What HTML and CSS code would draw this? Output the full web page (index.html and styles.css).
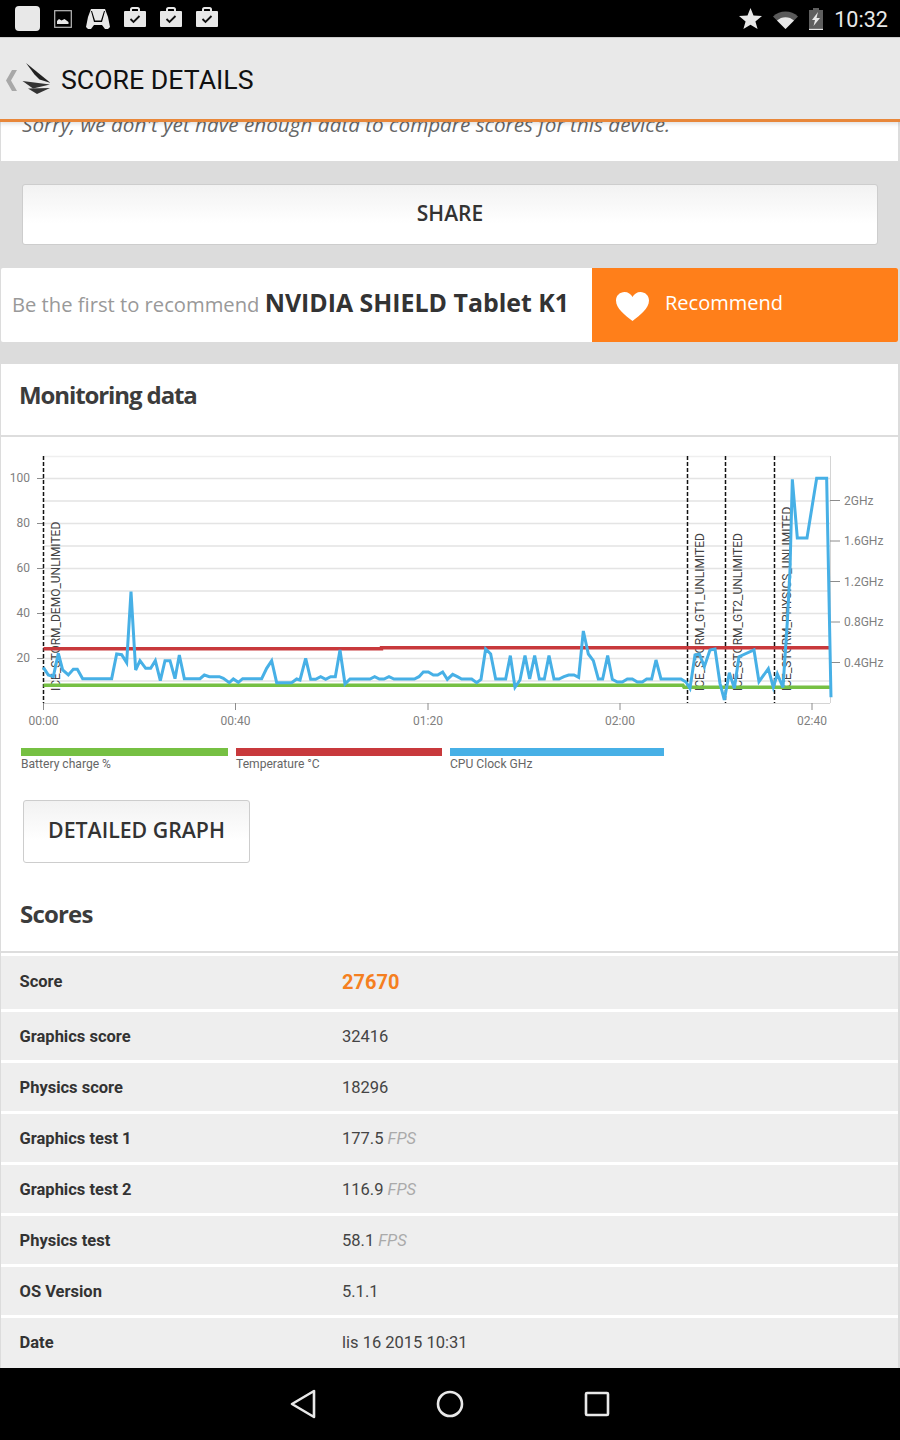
FILE: index.html
```html
<!DOCTYPE html>
<html lang="en">
<head>
<meta charset="UTF-8">
<title>Score details</title>
<link rel="stylesheet" href="styles.css">
</head>
<body>
<div class="status-bar">
  <div class="status-left">
    <svg width="25" height="25" viewBox="0 0 25 25"><rect width="25" height="25" rx="4" fill="#e8e8e8"/></svg>
    <svg width="18" height="18" viewBox="0 0 18 18"><rect x=".7" y=".7" width="16.6" height="16.6" fill="none" stroke="#bbb" stroke-width="1.2"/><path d="M3 14v-3l2-2 2.500 1.500 3-1.500 4 3v2z" fill="#e8e8e8"/></svg>
    <svg width="24" height="22" viewBox="0 0 24 22"><path d="M5 1h14l3 8 2 10-2 2h-3l-3-4H8l-3 4H2l-2-2 2-10z" fill="#e8e8e8"/><path d="M6 3l3 9.500h6L18 3l1 0-3 11H8L5 3z" fill="#000"/></svg>
    <svg class="bag" width="22" height="20" viewBox="0 0 22 20"><use href="#bag-icon"/></svg>
    <svg class="bag" width="22" height="20" viewBox="0 0 22 20"><use href="#bag-icon"/></svg>
    <svg class="bag" width="22" height="20" viewBox="0 0 22 20"><use href="#bag-icon"/></svg>
  </div>
  <div class="status-right">
    <svg width="23" height="21" viewBox="0 0 23 21"><path d="M11.500 0l3 7.600 8.500.5-6.600 5.300 2.200 7.600-7.100-4.300-7.100 4.300 2.200-7.600L0 8.100l8.500-.5z" fill="#e8e8e8"/></svg>
    <svg width="25" height="21" viewBox="0 0 25 21"><path d="M0 8.500a18 18 0 0 1 25 0L12.500 21z" fill="#5a5a5a"/><path d="M4 12.500a12.500 12.500 0 0 1 17 0L12.500 21z" fill="#e8e8e8"/></svg>
    <svg width="14" height="22" viewBox="0 0 14 22"><path d="M4 0h6v2h4v18H0V2h4z" fill="#5f5f5f"/><path d="M0 20.500h14V22H0z" fill="#e8e8e8"/><path d="M9 4L3 12h3l-1.500 6L11 10H7.500z" fill="#e8e8e8"/></svg>
    <span class="clock">10:32</span>
  </div>
</div>

<svg class="defs"><defs>
  <g id="bag-icon">
    <path d="M7 5V2.500Q7 1 8.500 1h5Q15 1 15 2.500V5" fill="none" stroke="#e8e8e8" stroke-width="2"/>
    <path d="M1 4h20q1 0 1 1v14q0 1-1 1H1q-1 0-1-1V5q0-1 1-1z" fill="#e8e8e8"/>
    <path d="M6.500 12l3 3 6-6" fill="none" stroke="#111" stroke-width="1.800"/>
  </g>
</defs></svg>

<div class="header-bar">
  <svg class="header-logo" width="46" height="36" viewBox="4 60 46 36">
    <path d="M12 69l-6 10.500 6 10.500h5l-6-10.500 6-10.500z" fill="#a8a8a8"/>
    <path d="M26 62l24.500 20-11-3.500-5-5z" fill="#222"/>
    <path d="M22.500 80l27.500 3.500-17 4z" fill="#333"/>
    <path d="M28 87.500l22-.5-13 6z" fill="#333"/>
  </svg>
  <div class="header-title">SCORE DETAILS</div>
</div>

<div class="main">
  <div class="note-card">
    <div class="note-text">Sorry, we don't yet have enough data to compare scores for this device.</div>
  </div>

  <div class="share-wrap">
    <div class="btn btn-share">SHARE</div>
  </div>

  <div class="recommend-card">
    <div class="recommend-text">Be the first to recommend <strong>NVIDIA SHIELD Tablet K1</strong></div>
    <div class="recommend-btn">
      <svg class="heart" width="33" height="29" viewBox="0 0 33 29"><path d="M16.500 29C9 23 0 16.500 0 8.500 0 3.500 4 0 8.500 0c3.500 0 6.500 2 8 5 1.500-3 4.500-5 8-5C29 0 33 3.500 33 8.500 33 16.500 24 23 16.500 29z" fill="#fff"/></svg>
      <span class="recommend-label">Recommend</span>
    </div>
  </div>

  <div class="data-card">
    <h2 class="card-title">Monitoring data</h2>

    <svg class="chart" width="897" height="290" viewBox="1 437 897 290">
      <g class="grid">
        <path class="grid-top" d="M44 456.500H830"/>
        <path d="M44 478.500H830M44 501H830M44 523.500H830M44 546H830M44 568.500H830M44 591H830M44 613.500H830M44 636H830M44 658.500H830M44 681H830"/>
      </g>
      <path class="axis" d="M44 703.500H830M830.500 456V703"/>
      <path class="tick" d="M37 478.500H44M37 523.500H44M37 568.500H44M37 613.500H44M37 658.500H44M830 500.500H840M830 541H840M830 581.500H840M830 622H840M830 662.500H840M235.500 703V710M428 703V710M620 703V710M812 703V710M43.500 703V710"/>
      <path class="marker" d="M43.500 456V703M687.500 456V703M725.500 456V703M774.500 456V703"/>

      <text class="axis-label" x="30" y="482" text-anchor="end">100</text>
      <text class="axis-label" x="30" y="527" text-anchor="end">80</text>
      <text class="axis-label" x="30" y="572" text-anchor="end">60</text>
      <text class="axis-label" x="30" y="617" text-anchor="end">40</text>
      <text class="axis-label" x="30" y="662" text-anchor="end">20</text>
      <text class="axis-label" x="844" y="504.500">2GHz</text>
      <text class="axis-label" x="844" y="545">1.6GHz</text>
      <text class="axis-label" x="844" y="585.500">1.2GHz</text>
      <text class="axis-label" x="844" y="626">0.8GHz</text>
      <text class="axis-label" x="844" y="666.500">0.4GHz</text>
      <text class="axis-label" x="43.500" y="725" text-anchor="middle">00:00</text>
      <text class="axis-label" x="235.500" y="725" text-anchor="middle">00:40</text>
      <text class="axis-label" x="428" y="725" text-anchor="middle">01:20</text>
      <text class="axis-label" x="620" y="725" text-anchor="middle">02:00</text>
      <text class="axis-label" x="812" y="725" text-anchor="middle">02:40</text>

      <text class="run-label" transform="translate(60 691) rotate(-90)">ICE_STORM_DEMO_UNLIMITED</text>
      <text class="run-label" transform="translate(704 691) rotate(-90)">ICE_STORM_GT1_UNLIMITED</text>
      <text class="run-label" transform="translate(742 691) rotate(-90)">ICE_STORM_GT2_UNLIMITED</text>
      <text class="run-label" transform="translate(791 691) rotate(-90)">ICE_STORM_PHYSICS_UNLIMITED</text>

      <path class="line-red" d="M43.500 648.700H381.500V647.700H829"/>
      <path class="line-green" d="M43.500 685.300H683L684 687.300H831"/>
      <polyline class="line-blue" transform="translate(0 450) scale(.33333)" points="130,652 145,675 160,680 175,610 188,660 205,675 220,658 232,658 248,686 335,686 350,612 365,614 380,638 393,425 407,660 420,632 437,655 452,655 466,632 481,692 495,632 510,632 525,686 538,615 553,686 600,686 613,675 628,680 658,680 670,685 688,698 700,687 715,697 728,686 785,686 800,655 815,632 830,698 875,698 890,687 900,690 917,625 932,688 947,688 962,680 977,688 992,680 1006,680 1020,600 1035,702 1050,687 1110,687 1124,680 1138,687 1152,687 1167,680 1182,687 1243,687 1257,680 1270,666 1285,666 1300,675 1313,675 1328,666 1342,688 1358,673 1372,680 1385,687 1415,687 1430,698 1443,688 1457,597 1472,612 1487,687 1517,687 1531,617 1545,712 1560,690 1575,617 1589,687 1604,617 1618,687 1633,687 1647,617 1662,687 1677,687 1692,680 1706,675 1722,675 1736,682 1750,543 1765,612 1780,632 1795,687 1808,687 1823,617 1837,688 1852,696 1867,696 1882,687 1897,687 1912,696 1927,696 1940,687 1955,687 1968,630 1983,687 2043,687 2058,696 2070,715 2085,615 2098,612 2113,650 2130,600 2145,597 2160,700 2173,750 2188,668 2203,715 2217,620 2262,600 2277,695 2305,656 2320,712 2332,672 2349,712 2362,515 2370,360 2377,88 2392,264 2421,264 2450,85 2480,85 2493,742"/>
    </svg>

    <div class="legend">
      <div class="legend-item legend-battery"><div class="legend-bar"></div>Battery charge %</div>
      <div class="legend-item legend-temp"><div class="legend-bar"></div>Temperature °C</div>
      <div class="legend-item legend-cpu"><div class="legend-bar"></div>CPU Clock GHz</div>
    </div>

    <div class="btn btn-graph">DETAILED GRAPH</div>

    <h2 class="card-title scores-title">Scores</h2>

    <div class="score-table">
      <div class="row row-main"><div class="row-label">Score</div><div class="row-value">27670</div></div>
      <div class="row"><div class="row-label">Graphics score</div><div class="row-value">32416</div></div>
      <div class="row"><div class="row-label">Physics score</div><div class="row-value">18296</div></div>
      <div class="row"><div class="row-label">Graphics test 1</div><div class="row-value">177.5 <em>FPS</em></div></div>
      <div class="row"><div class="row-label">Graphics test 2</div><div class="row-value">116.9 <em>FPS</em></div></div>
      <div class="row"><div class="row-label">Physics test</div><div class="row-value">58.1 <em>FPS</em></div></div>
      <div class="row"><div class="row-label">OS Version</div><div class="row-value">5.1.1</div></div>
      <div class="row row-last"><div class="row-label">Date</div><div class="row-value">lis 16 2015 10:31</div></div>
    </div>
  </div>
</div>

<div class="nav-bar">
  <div class="nav-cell"><svg width="26" height="30" viewBox="0 0 26 30"><path d="M24 2v26L2 15z" fill="none" stroke="#e8e8e8" stroke-width="2.600" stroke-linejoin="round"/></svg></div>
  <div class="nav-cell"><svg width="28" height="28" viewBox="0 0 28 28"><circle cx="14" cy="14" r="12" fill="none" stroke="#e8e8e8" stroke-width="2.600"/></svg></div>
  <div class="nav-cell"><svg width="26" height="26" viewBox="0 0 26 26"><rect x="2" y="2" width="22" height="22" rx="1" fill="none" stroke="#e8e8e8" stroke-width="2.600"/></svg></div>
</div>
</body>
</html>
```

FILE: styles.css
```css
html, body {
  margin: 0;
  padding: 0;
  height: 100%;
  overflow: hidden;
}

body {
  width: 900px;
  height: 1440px;
  display: flex;
  flex-direction: column;
  background-color: #dcdcdc;
  font-family: "Open Sans", "Noto Sans", sans-serif;
  color: #333;
}

.defs {
  display: none;
}

/* status bar */
.status-bar {
  flex: 0 0 37px;
  display: flex;
  justify-content: space-between;
  align-items: center;
  background-color: #000;
  border-bottom: 1px solid #cfcfcf;
  padding: 0 12px 0 15px;
}

.status-left, .status-right {
  display: flex;
  align-items: center;
}

.status-left {
  gap: 14px;
}

.status-right {
  gap: 11px;
}

.bag {
  margin-bottom: 3px;
}

.clock {
  font-family: Roboto, sans-serif;
  font-size: 21.6px;
  color: #e8e8e8;
  line-height: 24px;
  margin-top: 2px;
}

/* header */
.header-bar {
  flex: 0 0 81px;
  display: flex;
  align-items: center;
  background-color: #e9e9e9;
  border-bottom: 3px solid #e8873a;
  box-shadow: 0 2px 4px rgba(0, 0, 0, 0.12);
  position: relative;
  z-index: 2;
}

.header-logo {
  margin-left: 4px;
  flex-shrink: 0;
}

.header-title {
  margin: 2px 0 0 11px;
  font-family: Roboto, sans-serif;
  font-size: 26.7px;
  color: #111;
}

/* content */
.main {
  flex: 1;
  overflow: hidden;
}

.note-card {
  height: 39px;
  margin: 0 2px 0 1px;
  background-color: #fff;
  overflow: hidden;
}

.note-text {
  margin: -12px 0 0 21px;
  font-size: 20.7px;
  line-height: 28px;
  font-style: italic;
  color: #666;
  white-space: nowrap;
}

.share-wrap {
  padding: 23px 22px;
}

.btn {
  display: flex;
  align-items: center;
  justify-content: center;
  box-sizing: border-box;
  background: linear-gradient(#f2f2f2, #fff 65%);
  border: 1px solid #cdcdcd;
  border-radius: 3px;
  color: #333;
  font-weight: 600;
}

.btn-share {
  height: 61px;
  padding-bottom: 3px;
  font-size: 21px;
}

.recommend-card {
  display: flex;
  height: 74px;
  margin: 0 2px 22px 1px;
  background-color: #fff;
  border-radius: 2px;
  overflow: hidden;
}

.recommend-text {
  flex: 0 0 591px;
  box-sizing: border-box;
  padding-left: 11px;
  line-height: 68px;
  font-size: 20.2px;
  color: #999;
  white-space: nowrap;
}

.recommend-text strong {
  font-size: 24.9px;
  font-weight: 700;
  color: #333;
}

.recommend-btn {
  flex: 1;
  display: flex;
  align-items: center;
  gap: 16px;
  padding-left: 24px;
  background-color: #ff7f1a;
  color: #fff;
  font-size: 20px;
}

.heart {
  margin-top: 2px;
}

.recommend-label {
  margin-bottom: 6px;
}

.data-card {
  margin: 0 2px 0 1px;
  background-color: #fff;
}

.card-title {
  margin: 0;
  height: 73px;
  box-sizing: border-box;
  padding-left: 18px;
  line-height: 62px;
  font-size: 24px;
  font-weight: 700;
  letter-spacing: -1.1px;
  color: #3c3c3c;
  border-bottom: 2px solid #ddd;
}

.chart {
  display: block;
}

.grid path {
  fill: none;
  stroke: #e4e4e4;
  stroke-width: 1.5;
}

.grid .grid-top {
  stroke: #efefef;
}

.axis {
  fill: none;
  stroke: #d4d4d4;
  stroke-width: 1;
}

.tick {
  fill: none;
  stroke: #8c8c8c;
  stroke-width: 1;
}

.marker {
  fill: none;
  stroke: #111;
  stroke-width: 1.5;
  stroke-dasharray: 4 2;
}

.axis-label {
  font-family: Roboto, sans-serif;
  font-size: 12px;
  fill: #808080;
}

.run-label {
  font-family: Roboto, sans-serif;
  font-size: 12px;
  fill: #444;
}

.line-red, .line-green {
  fill: none;
  stroke-width: 3.4;
}

.line-red {
  stroke: #c8393c;
}

.line-green {
  stroke: #76c043;
}

.line-blue {
  fill: none;
  stroke: #47b0e6;
  stroke-width: 9;
  stroke-linejoin: miter;
}

/* legend */
.legend {
  display: flex;
  gap: 8px;
  margin: 21px 0 0 20px;
}

.legend-item {
  font-family: Roboto, sans-serif;
  font-size: 12.1px;
  line-height: 17px;
  color: #666;
}

.legend-bar {
  height: 8px;
}

.legend-battery {
  width: 207px;
}

.legend-temp {
  width: 206px;
}

.legend-cpu {
  width: 214px;
}

.legend-battery .legend-bar {
  background-color: #76c043;
}

.legend-temp .legend-bar {
  background-color: #c8393c;
}

.legend-cpu .legend-bar {
  background-color: #47b0e6;
}

.btn-graph {
  width: 227px;
  height: 63px;
  margin: 27px 0 0 22px;
  padding-bottom: 4px;
  font-size: 21.3px;
}

.scores-title {
  height: 70px;
  margin-top: 20px;
  padding-left: 19px;
  letter-spacing: -0.8px;
}

.score-table {
  margin-top: 3px;
  display: flex;
  flex-direction: column;
  gap: 3px;
}

.row {
  flex: 0 0 48px;
  display: flex;
  align-items: center;
  background-color: #eee;
  font-family: Roboto, sans-serif;
  font-size: 16.5px;
}

.row-main {
  flex-basis: 53px;
  box-sizing: border-box;
  padding-bottom: 2px;
}

.row-last {
  flex-basis: 52px;
  box-sizing: border-box;
  padding-bottom: 4px;
}

.row-label {
  flex: 0 0 341px;
  box-sizing: border-box;
  padding-left: 18.5px;
  font-weight: 700;
  color: #333;
}

.row-value {
  color: #444;
}

.row-value em {
  color: #aaa;
}

.row-main .row-value {
  font-size: 20px;
  font-weight: 700;
  color: #f57f20;
}

/* nav bar */
.nav-bar {
  flex: 0 0 72px;
  display: flex;
  justify-content: center;
  align-items: center;
  background-color: #000;
}

.nav-cell {
  flex: 0 0 147px;
  display: flex;
  justify-content: center;
}
```
